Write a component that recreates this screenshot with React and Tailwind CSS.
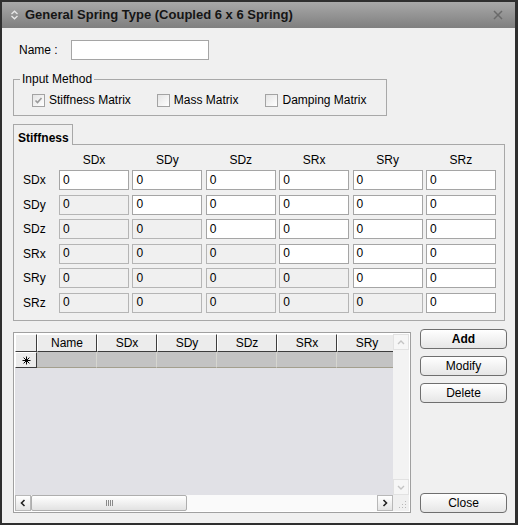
const cols = ['SDx', 'SDy', 'SDz', 'SRx', 'SRy', 'SRz'];
const gridCols = ['Name', 'SDx', 'SDy', 'SDz', 'SRx', 'SRy'];

function CheckBox({ checked, label }) {
  return (
    <div className="flex items-center">
      <div className="w-[13px] h-[13px] border border-[#a3a3a3] bg-gradient-to-br from-[#e4e4e4] to-white flex items-center justify-center">
        {checked && (
          <svg width="9" height="9" viewBox="0 0 9 9">
            <path d="M1.5 4.5 L3.5 6.5 L7.5 2" fill="none" stroke="#9a9a9a" strokeWidth="1.6" />
          </svg>
        )}
      </div>
      <span className="ml-[4px]">{label}</span>
    </div>
  );
}

function Cell({ editable }) {
  return (
    <div
      className={
        'h-[20px] w-[70px] border flex items-center pl-[3px] pb-[1px] ' +
        (editable ? 'bg-white border-[#a5a5a5]' : 'bg-[#f0f0f0] border-[#b5b5b5]')
      }
    >
      0
    </div>
  );
}

function Button({ children, bold }) {
  return (
    <div
      className={
        'h-[20px] w-[87px] rounded-[4px] border border-[#6f6f6f] bg-gradient-to-b from-white to-[#e6e6e6] flex items-center justify-center ' +
        (bold ? 'font-bold' : '')
      }
    >
      {children}
    </div>
  );
}

export default function App() {
  return (
    <div className="w-[518px] h-[525px] bg-[#2f2f2f] pl-[2px] pt-[2px] pr-[3px] pb-[2px] font-['Liberation_Sans',Arial,sans-serif] text-[12px] text-black">
      <div className="h-full flex flex-col bg-[#f0f0f0]">
        {/* title bar */}
        <div className="h-[26px] shrink-0 bg-gradient-to-b from-[#a9a9a9] to-[#7f7f7f] flex items-center pl-[8px] pr-[12px]">
          <svg width="9" height="10" viewBox="0 0 9 10">
            <path d="M1.5 4 L4.5 1.2 L7.5 4" fill="none" stroke="#e8e8e8" strokeWidth="1.3" />
            <path d="M1.5 6 L4.5 8.8 L7.5 6" fill="none" stroke="#e8e8e8" strokeWidth="1.3" />
          </svg>
          <span className="ml-[6px] font-bold text-[13px] text-[#151515]">
            General Spring Type (Coupled 6 x 6 Spring)
          </span>
          <svg className="ml-auto" width="10" height="10" viewBox="0 0 10 10">
            <path d="M1 1 L9 9 M9 1 L1 9" stroke="#6a6a6a" strokeWidth="1.5" />
          </svg>
        </div>

        <div className="flex-1 flex flex-col px-[11px]">
          {/* name */}
          <div className="flex items-center mt-[12px] pl-[6px]">
            <span className="w-[52px]">Name :</span>
            <div className="w-[138px] h-[20px] bg-white border border-[#a5a5a5]" />
          </div>

          {/* input method */}
          <div className="relative mt-[19px] w-[374px] h-[37px] border border-[#a8a8a8]">
            <span className="absolute -top-[8px] left-[6px] px-[2px] bg-[#f0f0f0] leading-[14px]">Input Method</span>
            <div className="flex items-center pl-[18px] pt-[11px]">
              <CheckBox checked label="Stiffness Matrix" />
              <div className="ml-[26px]">
                <CheckBox label="Mass Matrix" />
              </div>
              <div className="ml-[27px]">
                <CheckBox label="Damping Matrix" />
              </div>
            </div>
          </div>

          {/* tab */}
          <div className="mt-[8px] w-[60px] h-[21px] -mb-[1px] relative z-10 border border-b-0 border-[#a8a8a8] bg-[#f0f0f0] font-bold pl-[4px] pt-[4px]">
            Stiffness
          </div>
          <div className="w-[492px] h-[177px] border border-[#a8a8a8] pt-[7px]">
            <div className="flex pl-[45px] h-[16px] items-center">
              {cols.map((c, i) => (
                <div key={c} className={'w-[70px] text-center ' + (i > 0 ? 'ml-[3.4px]' : '')}>
                  {c}
                </div>
              ))}
            </div>
            {cols.map((r, ri) => (
              <div key={r} className={'flex items-center ' + (ri === 0 ? 'mt-[2px]' : 'mt-[4.6px]')}>
                <div className="w-[45px] pl-[9px]">{r}</div>
                {cols.map((c, ci) => (
                  <div key={c} className={ci > 0 ? 'ml-[3.4px]' : ''}>
                    <Cell editable={ci >= ri} />
                  </div>
                ))}
              </div>
            ))}
          </div>

          {/* bottom */}
          <div className="flex mt-[8px]">
            <div className="mt-[3px] w-[398px] h-[181px] border border-[#a0a0a0] p-[1px] bg-white flex flex-col">
              <div className="flex-1 flex min-h-0">
                <div className="flex-1 bg-[#e1e1e6] overflow-hidden">
                  <div className="flex h-[18px] w-[450px]">
                    <div className="w-[22px] shrink-0 bg-[#ececec] border border-white border-r-[#3c3c3c] border-b-[#3c3c3c]" />
                    {gridCols.map((c) => (
                      <div
                        key={c}
                        className="w-[60px] shrink-0 bg-[#ececec] border border-white border-r-[#3c3c3c] border-b-[#3c3c3c] flex items-center justify-center"
                      >
                        {c}
                      </div>
                    ))}
                  </div>
                  <div className="flex h-[16px] w-[450px]">
                    <div className="w-[22px] shrink-0 bg-[#ececec] border border-white border-r-[#3c3c3c] border-b-[#3c3c3c] flex items-center justify-center">
                      <svg width="9" height="9" viewBox="0 0 9 9">
                        <path d="M4.5 0.5 V8.5 M0.5 4.5 H8.5 M1.6 1.6 L7.4 7.4 M7.4 1.6 L1.6 7.4" stroke="#000" strokeWidth="1" />
                      </svg>
                    </div>
                    {gridCols.map((c) => (
                      <div key={c} className="w-[60px] shrink-0 bg-[#c3c3c3] border-r border-b border-r-[#d6d6d0] border-b-[#a39f8e]" />
                    ))}
                  </div>
                </div>
                <div className="w-[16px] bg-[#f3f3f3] flex flex-col justify-between">
                  <div className="h-[16px] border border-[#e2e2e2] bg-[#f6f6f6] flex items-center justify-center">
                    <svg width="8" height="5" viewBox="0 0 8 5">
                      <path d="M1 4 L4 1 L7 4" fill="none" stroke="#c4c4c4" strokeWidth="1.4" />
                    </svg>
                  </div>
                  <div className="h-[16px] border border-[#e2e2e2] bg-[#f6f6f6] flex items-center justify-center">
                    <svg width="8" height="5" viewBox="0 0 8 5">
                      <path d="M1 1 L4 4 L7 1" fill="none" stroke="#c4c4c4" strokeWidth="1.4" />
                    </svg>
                  </div>
                </div>
              </div>
              <div className="h-[16px] flex bg-[#fafafa]">
                <div className="w-[16px] border border-[#b8b8b8] bg-gradient-to-b from-white to-[#e4e4e4] flex items-center justify-center">
                  <svg width="6" height="8" viewBox="0 0 6 8">
                    <path d="M4.5 1 L1.5 4 L4.5 7" fill="none" stroke="#222" strokeWidth="1.6" />
                  </svg>
                </div>
                <div className="w-[156px] border border-[#aeaeae] rounded-[2px] bg-gradient-to-b from-white to-[#e2e2e2] flex items-center justify-center">
                  <svg width="7" height="6" viewBox="0 0 7 6">
                    <path d="M0.5 0 V6 M2.5 0 V6 M4.5 0 V6 M6.5 0 V6" stroke="#8a8a8a" strokeWidth="1" />
                  </svg>
                </div>
                <div className="flex-1" />
                <div className="w-[16px] border border-[#b8b8b8] bg-gradient-to-b from-white to-[#e4e4e4] flex items-center justify-center">
                  <svg width="6" height="8" viewBox="0 0 6 8">
                    <path d="M1.5 1 L4.5 4 L1.5 7" fill="none" stroke="#222" strokeWidth="1.6" />
                  </svg>
                </div>
                <div className="w-[16px] bg-[#f0f0f0] flex items-end justify-end p-[2px]">
                  <svg width="9" height="9" viewBox="0 0 9 9">
                    <path d="M7 1h1v1h-1zM7 4h1v1h-1zM4 4h1v1h-1zM7 7h1v1h-1zM4 7h1v1h-1zM1 7h1v1h-1z" fill="#b8b8b8" />
                  </svg>
                </div>
              </div>
            </div>

            <div className="ml-[9px] h-[184px] flex flex-col">
              <Button bold>Add</Button>
              <div className="mt-[7px]">
                <Button>Modify</Button>
              </div>
              <div className="mt-[7px]">
                <Button>Delete</Button>
              </div>
              <div className="mt-auto">
                <Button>Close</Button>
              </div>
            </div>
          </div>
        </div>
      </div>
    </div>
  );
}
